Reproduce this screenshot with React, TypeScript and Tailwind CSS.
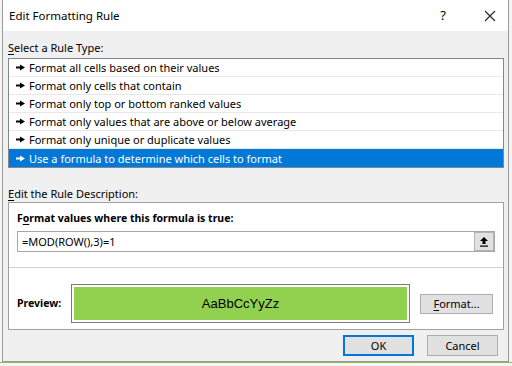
import React from "react";

const rules = [
  "Format all cells based on their values",
  "Format only cells that contain",
  "Format only top or bottom ranked values",
  "Format only values that are above or below average",
  "Format only unique or duplicate values",
  "Use a formula to determine which cells to format",
];

function Pointer({ color }: { color: string }) {
  return (
    <svg width="9" height="7" viewBox="0 0 9 7" className="shrink-0">
      <polygon points="0,2.5 4,2.5 4,0.5 9,3.5 4,6.5 4,4.5 0,4.5" fill={color} />
    </svg>
  );
}

export default function App() {
  const selected = 5;
  return (
    <div
      className="w-[512px] h-[366px] bg-[#f4f4f4] overflow-hidden text-[11px] text-black"
      style={{ fontFamily: '"Noto Sans", "Liberation Sans", sans-serif' }}
    >
      <div className="ml-[2px] w-[507px] h-[362px] border-x border-b border-[#9a9a9a] bg-[#f0f0f0] flex flex-col">
        {/* Title bar */}
        <div className="h-[31px] bg-white flex items-center pl-[6px] shrink-0">
          <span className="text-[11.5px] leading-none">Edit Formatting Rule</span>
          <span className="ml-auto mr-[38px] text-[13px] leading-none">?</span>
          <svg width="12" height="12" viewBox="0 0 12 12" className="mr-[12px]">
            <path d="M1 1 L11 11 M11 1 L1 11" stroke="#222" strokeWidth="1.1" />
          </svg>
        </div>

        <div className="flex flex-col px-[5px] pr-[4px]">
          <div className="mt-[9px] h-[16px] leading-[16px]">
            <span className="underline underline-offset-2">S</span>elect a Rule Type:
          </div>

          <div className="mt-[2px] border border-[#828790] bg-white">
            {rules.map((r, i) => (
              <div
                key={r}
                className={
                  "h-[18px] flex items-center gap-[4px] pl-[7px] " +
                  (i === selected
                    ? "bg-[#0078d7] text-white"
                    : "border-b border-[#e8e8e8]")
                }
              >
                <Pointer color={i === selected ? "#ffffff" : "#000000"} />
                <span className="leading-none">{r}</span>
              </div>
            ))}
          </div>

          <div className="mt-[18px] h-[16px] leading-[16px]">
            <span className="underline underline-offset-2">E</span>dit the Rule Description:
          </div>

          <div className="border border-[#a0a0a0] bg-white flex flex-col">
            <div className="px-[8px]">
              <div className="mt-[7px] h-[16px] leading-[16px] font-bold text-[10.5px]">
                F<span className="underline underline-offset-2">o</span>rmat values where this formula is true:
              </div>
              <div className="mt-[5px] h-[21px] border border-[#a8a8a8] flex items-center">
                <span className="pl-[4px] leading-none">=MOD(ROW(),3)=1</span>
                <div className="ml-auto h-[19px] w-[20px] bg-[#e1e1e1] border border-[#b4b4b4] flex items-center justify-center">
                  <svg width="10" height="11" viewBox="0 0 10 11">
                    <path d="M5 1 L1 5 L3.5 5 L3.5 8 L6.5 8 L6.5 5 L9 5 Z" fill="#000" />
                    <rect x="1" y="9.5" width="8" height="1.2" fill="#000" />
                  </svg>
                </div>
              </div>
            </div>
            <div className="mt-[15px] border-t border-[#d0d0d0]" />
            <div className="flex items-center pl-[8px] pt-[16px] pb-[6px]">
              <span className="font-bold text-[10.5px] w-[54px]">Preview:</span>
              <div className="w-[339px] h-[39px] border border-[#7a7a7a] p-[2px]">
                <div
                  className="h-full bg-[#92d050] flex items-center justify-center text-[13px]"
                  style={{ fontFamily: '"Liberation Sans", "Noto Sans", sans-serif' }}
                >
                  AaBbCcYyZz
                </div>
              </div>
              <button className="ml-[10px] w-[73px] h-[20px] bg-[#e1e1e1] border border-[#adadad] leading-none">
                <span className="underline underline-offset-2">F</span>ormat...
              </button>
            </div>
          </div>

          <div className="mt-[5px] flex justify-end gap-[13px] pr-[6px]">
            <button className="w-[71px] h-[21px] bg-[#e1e1e1] border-2 border-[#0078d7] leading-none">OK</button>
            <button className="w-[71px] h-[21px] bg-[#e1e1e1] border border-[#adadad] leading-none">Cancel</button>
          </div>
        </div>
      </div>
      <div className="h-[1px] bg-[#8fbc5a]" />
    </div>
  );
}
